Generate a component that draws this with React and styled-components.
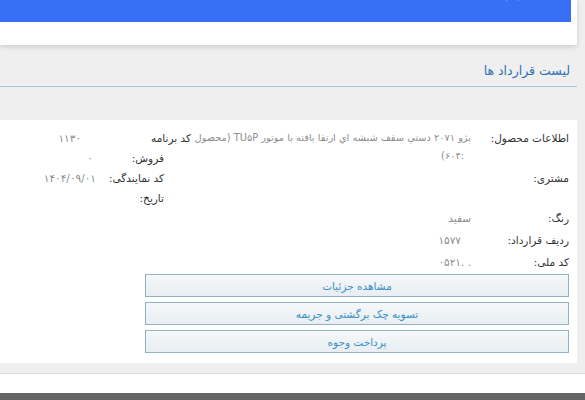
import React from "react";
import styled, { createGlobalStyle } from "styled-components";

const Global = createGlobalStyle`
  html, body { margin: 0; padding: 0; background: #ffffff; }
  body {
    font-family: "DejaVu Sans", "Noto Sans", sans-serif;
    direction: rtl;
    overflow: hidden;
  }
  * { box-sizing: border-box; }
`;

const Main = styled.div`
  background: #efefef;
  padding: 0 8px 10px 0;
  border-bottom: 1px solid #dddddd;
`;

const TopPanel = styled.div`
  background: #ffffff;
  height: 45px;
  padding-right: 6px;
  box-shadow: 0 2px 5px rgba(0, 0, 0, 0.14);
`;

const BlueBar = styled.div`
  background: #376ff6;
  height: 22px;
  display: flex;
  justify-content: flex-start;
  padding-right: 12px;
`;

const BarTitle = styled.span`
  color: #ffffff;
  font-size: 14px;
  line-height: 20px;
  margin-top: -18px;
`;

const TitleSection = styled.div`
  padding: 16px 7px 5px 0;
  border-bottom: 1px solid #a8c5e5;
`;

const Title = styled.h2`
  margin: 0;
  font-weight: normal;
  font-size: 12.5px;
  line-height: 20px;
  color: #2f6fb4;
`;

const Card = styled.div`
  margin-top: 33px;
  background: #ffffff;
  padding: 7px 8px 10px 8px;
`;

const Details = styled.div`
  display: flex;
  align-items: flex-start;
`;

const RightBlock = styled.div`
  width: 378px;
  flex: none;
`;

const InfoRow = styled.div`
  display: grid;
  grid-template-columns: 98px 1fr;
  padding: 2px 0;
  line-height: 18px;
  font-size: 10.5px;
`;

const Label = styled.div`
  color: #333333;
  white-space: nowrap;
`;

const Value = styled.div`
  color: #8c8c8c;
  white-space: nowrap;
  font-size: ${(p) => p.$size || 10.5}px;
  min-height: ${(p) => (p.$lines || 1) * 18}px;
  padding-right: ${(p) => p.$pad || 0}px;
`;

const SubLine = styled.div`
  padding-right: ${(p) => p.$pad || 0}px;
`;

const Ltr = styled.span`
  direction: ltr;
  unicode-bidi: isolate;
`;

const LeftBlock = styled.div`
  display: grid;
  grid-template-columns: 90px 60px;
  font-size: 10.5px;
  line-height: 18px;
`;

const SideLabel = styled.div`
  color: #333333;
  white-space: nowrap;
  padding: 2px ${(p) => p.$inset || 0}px 0 0;
`;

const SideValue = styled.div`
  color: #8c8c8c;
  white-space: nowrap;
  padding: 2px ${(p) => p.$pad || 0}px 0 0;
`;

const Actions = styled.div`
  width: 424px;
  margin-top: 1px;
  display: flex;
  flex-direction: column;
  gap: 5px;
`;

const ActionButton = styled.button`
  height: 23px;
  border: 1px solid #93b2c5;
  background: linear-gradient(#f5f8fa, #e8eef2);
  color: #3a8fc4;
  font-family: inherit;
  font-size: 10.5px;
  padding: 0;
  cursor: pointer;
`;

const Spacer = styled.div`
  height: 19px;
  background: #ffffff;
`;

const Footer = styled.div`
  height: 30px;
  background: #666666;
`;

const sideRows = [
  { label: "کد برنامه", inset: 0, value: "۱۱۳۰", pad: 20 },
  { label: "فروش:", inset: 27, value: "۰", pad: 8 },
  { label: "کد نمایندگی:", inset: 27, value: "۱۴۰۴/۰۹/۰۱", pad: 5 },
  { label: "تاریخ:", inset: 27, value: "", pad: 0 },
];

const actions = ["مشاهده جزئیات", "تسویه چک برگشتی و جریمه", "پرداخت وجوه"];

export default function App() {
  return (
    <>
      <Global />
      <Main>
        <TopPanel>
          <BlueBar>
            <BarTitle>پنل کاربری</BarTitle>
          </BlueBar>
        </TopPanel>
        <TitleSection>
          <Title>لیست قرارداد ها</Title>
        </TitleSection>
        <Card>
          <Details>
            <RightBlock>
              <InfoRow>
                <Label>اطلاعات محصول:</Label>
                <Value $size={9.8}>
                  پژو ۲۰۷۱ دستي سقف شيشه اي ارتقا يافته با موتور TU۵P (محصول
                  <SubLine $pad={7}>
                    <Ltr>(۶۰۴:</Ltr>
                  </SubLine>
                </Value>
              </InfoRow>
              <InfoRow>
                <Label>مشتری:</Label>
                <Value $lines={2} />
              </InfoRow>
              <InfoRow>
                <Label>رنگ:</Label>
                <Value>سفید</Value>
              </InfoRow>
              <InfoRow>
                <Label>ردیف قرارداد:</Label>
                <Value $pad={10}>۱۵۷۷</Value>
              </InfoRow>
              <InfoRow>
                <Label>کد ملی:</Label>
                <Value>
                  <Ltr>۰۵۲۱. .</Ltr>
                </Value>
              </InfoRow>
            </RightBlock>
            <LeftBlock>
              {sideRows.map((r) => (
                <React.Fragment key={r.label}>
                  <SideLabel $inset={r.inset}>{r.label}</SideLabel>
                  <SideValue $pad={r.pad}>
                    <Ltr>{r.value}</Ltr>
                  </SideValue>
                </React.Fragment>
              ))}
            </LeftBlock>
          </Details>
          <Actions>
            {actions.map((a) => (
              <ActionButton key={a}>{a}</ActionButton>
            ))}
          </Actions>
        </Card>
      </Main>
      <Spacer />
      <Footer />
    </>
  );
}
